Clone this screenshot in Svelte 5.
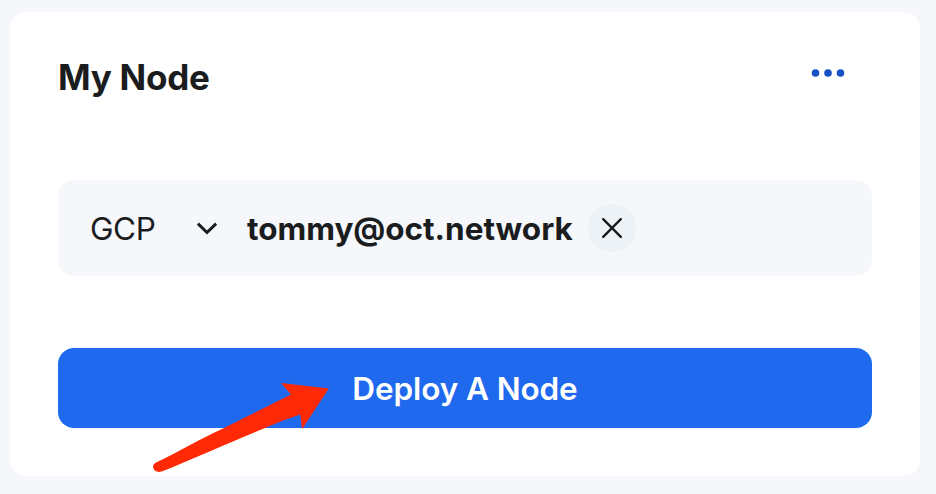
<script>
  let provider = 'GCP';
  let account = 'tommy@oct.network';
</script>

<main>
  <section class="card">
    <header>
      <h1><span>My Node</span></h1>
      <button class="more" aria-label="More options">
        <svg width="34" height="10" viewBox="0 0 34 10" fill="#1652c5"><circle cx="4.5" cy="5" r="3.8"/><circle cx="17" cy="5" r="3.8"/><circle cx="29.5" cy="5" r="3.8"/></svg>
      </button>
    </header>
    <div class="account">
      <span class="provider">{provider}</span>
      <svg class="chevron" width="22" height="16" viewBox="0 0 22 16" fill="none" stroke="#1b1c1e" stroke-width="3"><path d="M1.9 3.6 11 12.5 20.1 3.6"/></svg>
      <strong>{account}</strong>
      <button class="close" aria-label="Remove account">
        <svg width="24" height="24" viewBox="0 0 24 24" fill="none" stroke="#1b1c1e" stroke-width="2.4" stroke-linecap="round"><path d="M3.2 3.2 20.8 20.8M20.8 3.2 3.2 20.8"/></svg>
      </button>
    </div>
    <button class="deploy"><span>Deploy A Node</span></button>
  </section>
  <svg class="arrow" width="180" height="94" viewBox="0 0 180 94"><path fill="#ff2a05" d="M131 2 178.8 7.5 152 48.3 150.3 33.5Q133 39 115 47C83 60 45 77 12.5 90.2Q6 92.5 3.8 88.2Q1.5 84 6 81.6C32 69 50 58 73 47.5Q110 29 141 13.5Z"/></svg>
</main>

<style>
  :global(body) { margin: 0; background: #f5f7fb; }
  main { position: relative; box-sizing: border-box; width: 936px; height: 494px; padding: 12px 16px 18px 10px; background: #f5f7fb; font-family: Inter, sans-serif; color: #1b1c1e; }
  .card { box-sizing: border-box; height: 464px; padding: 48px; background: #fff; border-radius: 16px; }
  header { display: flex; justify-content: space-between; height: 120px; padding-right: 27px; }
  h1 { margin: -5px 0 0; font-size: 35px; line-height: 44px; font-weight: 700; letter-spacing: -0.25px; }
  button { border: 0; padding: 0; font: inherit; }
  .more { height: 10px; margin-top: 8px; background: none; }
  svg { display: block; }
  .account { display: flex; align-items: center; box-sizing: border-box; height: 96px; padding-left: 32px; background: #f5f7fb; border-radius: 16px; font-size: 31.5px; }
  .provider { width: 106px; letter-spacing: -0.4px; }
  .chevron { margin-right: 29px; }
  strong { width: 341px; font-weight: 700; letter-spacing: -0.03px; white-space: nowrap; }
  .close { display: grid; flex: none; place-items: center; width: 48px; height: 48px; border-radius: 50%; background: #ecf2f6; }
  .deploy { display: block; width: 100%; height: 80px; margin-top: 72px; border-radius: 16px; background: #1f69ee; color: #fff; font-size: 31.5px; font-weight: 600; letter-spacing: -0.1px; }
  .arrow { position: absolute; left: 150px; top: 381px; }
</style>
